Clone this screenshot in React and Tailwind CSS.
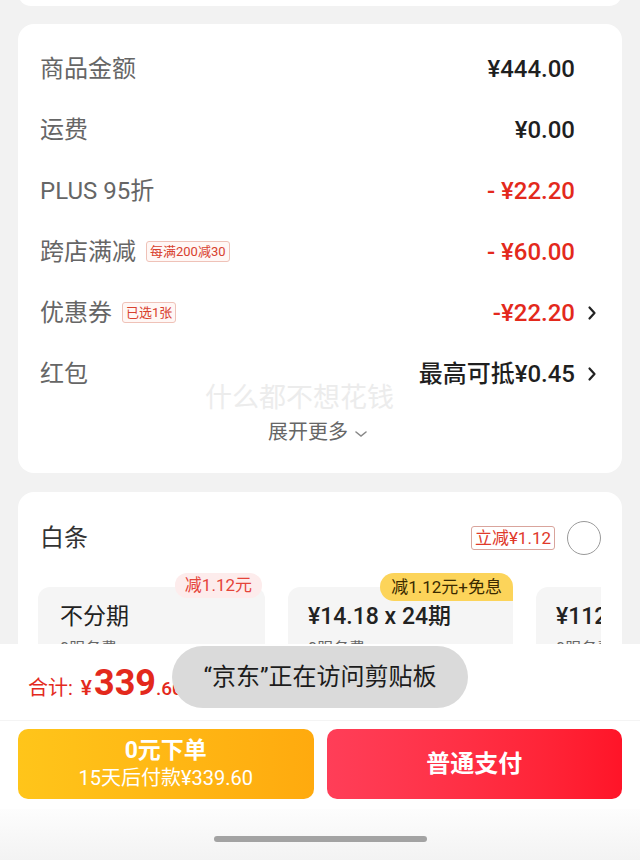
import React from 'react';

const font = "font-['Roboto','Noto_Sans_CJK_SC',sans-serif]";

function Chevron() {
  return (
    <svg width="10" height="16" viewBox="0 0 10 16" className="ml-[12px]">
      <path d="M2.5 2.5 L7.5 8 L2.5 13.5" fill="none" stroke="#222" strokeWidth="2.2" strokeLinecap="round" strokeLinejoin="round" />
    </svg>
  );
}

function Tag({ children }) {
  return (
    <span className="ml-[10px] rounded-[3px] border border-[#efc2b8] bg-[#fff7f5] px-[3px] text-[13px] leading-[19px] text-[#d8412e]">
      {children}
    </span>
  );
}

function Row({ label, tag, value, red, arrow }) {
  return (
    <div className="flex h-[61px] items-center justify-between">
      <div className="flex items-center">
        <span className="text-[24px] text-[#666]">{label}</span>
        {tag && <Tag>{tag}</Tag>}
      </div>
      <div className="flex items-center">
        <span className={`text-[24px] font-medium ${red ? 'text-[#e3291c]' : 'text-[#1f1f1f]'}`}>{value}</span>
        {arrow ? <Chevron /> : <span className="w-[22px]" />}
      </div>
    </div>
  );
}

export default function App() {
  return (
    <div className={`relative flex h-[860px] w-[640px] flex-col overflow-hidden bg-[#f2f2f2] ${font}`}>
      {/* scrolling content */}
      <div className="flex flex-1 flex-col gap-[18px] overflow-hidden px-[18px]">
        <div className="-mt-5 h-[26px] shrink-0 rounded-2xl bg-white" />

        {/* price breakdown */}
        <div className="relative shrink-0 rounded-2xl bg-white pb-[27px] pl-[22px] pr-[25px] pt-[14px]">
          <Row label="商品金额" value="¥444.00" />
          <Row label="运费" value="¥0.00" />
          <Row label="PLUS 95折" value="- ¥22.20" red />
          <Row label="跨店满减" tag="每满200减30" value="- ¥60.00" red />
          <Row label="优惠券" tag="已选1张" value="-¥22.20" red arrow />
          <Row label="红包" value="最高可抵¥0.45" arrow />
          <div className="mt-[14px] flex h-[28px] items-center justify-center text-[20px] text-[#666]">
            展开更多
            <svg width="16" height="10" viewBox="0 0 16 10" className="ml-[5px] mt-[4px]">
              <path d="M3 3 L8 7 L13 3" fill="none" stroke="#888" strokeWidth="1.6" strokeLinecap="round" />
            </svg>
          </div>
          <div className="pointer-events-none absolute left-[187px] top-[358px] text-[27px] leading-[32px] text-[#ececec]">
            什么都不想花钱
          </div>
        </div>

        {/* baitiao */}
        <div className="mt-px shrink-0 rounded-2xl bg-white pl-[20px] pr-[21px] pt-[26px]">
          <div className="flex h-[40px] items-center justify-between pl-[2px]">
            <span className="text-[24px] text-[#333]">白条</span>
            <div className="flex items-center">
              <span className="rounded-[3px] border border-[#d9a49c] px-[3px] text-[17px] leading-[22px] text-[#e0392a]">立减¥1.12</span>
              <span className="ml-[12px] h-[34px] w-[34px] rounded-full border-[1.5px] border-[#9a9a9a]" />
            </div>
          </div>
          <div className="mt-[15px] flex gap-[23px] overflow-hidden pt-[14px]">
            <div className="relative h-[100px] w-[227px] shrink-0 rounded-[12px] bg-[#f5f5f5] pl-[22px] pt-[16px]">
              <span className="absolute right-[3px] top-[-14px] rounded-[12px] bg-[#fdecec] px-[10px] text-[17px] leading-[25px] text-[#e5443a]">减1.12元</span>
              <div className="text-[23px] leading-[28px] text-[#222]">不分期</div>
              <div className="mt-[6px] text-[16px] text-[#666]">0服务费</div>
            </div>
            <div className="relative h-[100px] w-[225px] shrink-0 rounded-[12px] bg-[#f5f5f5] pl-[20px] pt-[16px]">
              <span className="absolute right-0 top-[-14px] rounded-t-[14px] rounded-bl-[14px] bg-[#fcd45a] px-[11px] text-[17px] leading-[28px] text-[#3a2a00]">减1.12元+免息</span>
              <div className="text-[23px] font-medium leading-[28px] text-[#222]">¥14.18 x 24期</div>
              <div className="mt-[6px] text-[16px] text-[#666]">0服务费</div>
            </div>
            <div className="relative h-[100px] w-[225px] shrink-0 rounded-[12px] bg-[#f5f5f5] pl-[20px] pt-[16px]">
              <div className="text-[23px] font-medium leading-[28px] text-[#222]">¥112.20 x 3期</div>
              <div className="mt-[6px] text-[16px] text-[#666]">0服务费</div>
            </div>
          </div>
          <div className="h-[40px]" />
        </div>
      </div>

      {/* footer */}
      <div className="shrink-0 bg-white">
        <div className="flex h-[76px] items-baseline pl-[28px] pt-[19px]">
          <span className="text-[20px] text-[#e3291c]">合计:</span>
          <span className="ml-[8px] text-[21px] font-medium text-[#e3291c]">¥</span>
          <span className="ml-[2px] text-[36px] font-bold leading-[40px] text-[#e3291c]">339</span>
          <span className="text-[19px] font-medium text-[#e3291c]">.60</span>
          <span className="ml-[8px] text-[18px] text-[#f4c5bd]">共减¥104.60</span>
        </div>
        <div className="flex gap-[13px] border-t border-[#f4f4f4] px-[18px] pb-[10px] pt-[8px]">
          <button className="flex h-[70px] flex-1 flex-col items-center justify-center rounded-[10px] bg-gradient-to-r from-[#ffc51a] to-[#ffaa0e] text-white">
            <span className="text-[23px] font-bold leading-[29px]">0元下单</span>
            <span className="text-[20px] leading-[27px]">15天后付款¥339.60</span>
          </button>
          <button className="flex h-[70px] flex-1 items-center justify-center rounded-[10px] bg-gradient-to-r from-[#ff3e58] to-[#ff1428] text-[24px] font-bold text-white">
            普通支付
          </button>
        </div>
        <div className="flex h-[51px] items-start justify-center bg-gradient-to-b from-[#fdfdfd] to-[#f3f3f3] pt-[27px]">
          <div className="h-[6px] w-[213px] rounded-full bg-[#a3a3a3]" />
        </div>
      </div>

      {/* clipboard toast */}
      <div className="absolute left-[172px] top-[646px] flex h-[62px] w-[296px] items-center justify-center rounded-full bg-[#dadada] text-[24px] text-[#1c1c1c]">
        “京东”正在访问剪贴板
      </div>
    </div>
  );
}
